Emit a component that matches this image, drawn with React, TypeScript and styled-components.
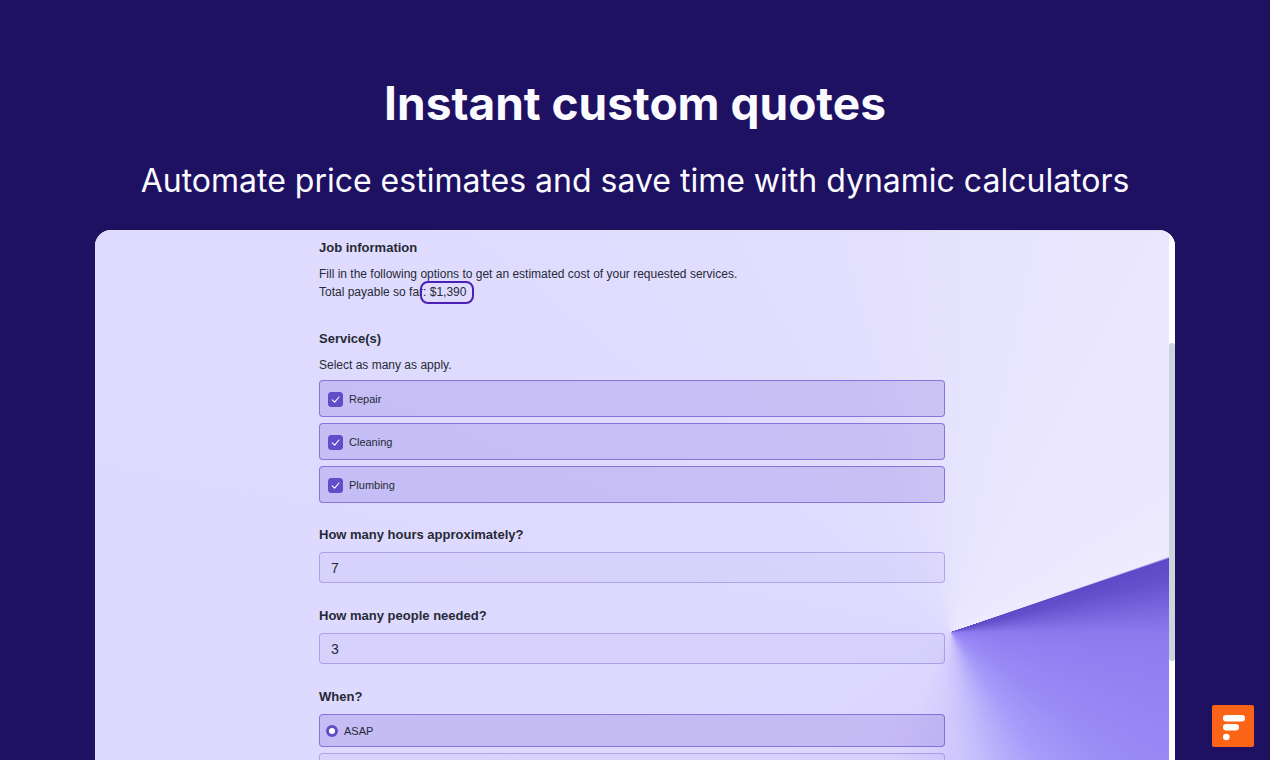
import React, { useState } from "react";
import styled, { createGlobalStyle } from "styled-components";

const GlobalStyle = createGlobalStyle`
  * { box-sizing: border-box; }
  body {
    margin: 0;
    background: #1e1162;
    font-family: "Liberation Sans", Arial, sans-serif;
    color: #262a35;
  }
`;

const Page = styled.main`
  position: relative;
  display: flex;
  flex-direction: column;
  align-items: center;
  height: 100vh;
  overflow: hidden;
  padding: 71px 40px 0;
`;

const Title = styled.h1`
  margin: 0;
  font: 700 46px/64px Inter, sans-serif;
  color: #fbfaff;
  text-align: center;
`;

const Subtitle = styled.p`
  margin: 26px 0 29px;
  font: 400 32px/40px Inter, sans-serif;
  color: #fbfaff;
  text-align: center;
`;

const Preview = styled.section`
  display: flex;
  flex: 1;
  width: 100%;
  max-width: 1080px;
  min-height: 0;
  overflow: hidden;
  border-radius: 16px 16px 0 0;
  background: #ffffff;
`;

const FormArea = styled.div`
  flex: 1;
  overflow: hidden;
  padding: 6px 24px 0;
  border-top: 1px solid #dedeea;
  background: conic-gradient(
    at 856px 401px,
    #e6e3fe 0deg,
    #e9e6fe 20deg,
    #ebe8fe 50deg,
    #eeebfe 70.9deg,
    #5f49c7 71.4deg,
    #6450cb 76deg,
    #8c79ee 90deg,
    #917ef1 98deg,
    #9a8af5 125deg,
    #a69bfa 145deg,
    #b8affb 158deg,
    #c8c0fc 170deg,
    #d4ccfd 184deg,
    #dcd5fe 205deg,
    #ddd8ff 240deg,
    #dedaff 280deg,
    #e0dcff 315deg,
    #e2defe 340deg,
    #e6e3fe 360deg
  );
`;

const ScrollTrack = styled.div`
  width: 6px;
  padding-top: 113px;
  background: #ffffff;
`;

const ScrollThumb = styled.div`
  height: 318px;
  border-radius: 3px;
  background: #cdd5dc;
`;

const Form = styled.form`
  width: 100%;
  max-width: 626px;
  margin: 0 auto;
`;

const Group = styled.fieldset<{ $after: number }>`
  min-width: 0;
  margin: 0 0 ${(p) => p.$after}px;
  padding: 0;
  border: 0;
`;

const Heading = styled.h2`
  margin: 0 0 6px;
  font-size: 13px;
  line-height: 22px;
  font-weight: 700;
`;

const FieldLabel = styled(Heading).attrs({ as: "label" })<{ htmlFor: string }>`
  display: block;
`;

const Copy = styled.p`
  margin: 0;
  font-size: 12px;
  line-height: 18px;
`;

const Amount = styled.span`
  position: relative;

  &::after {
    content: "";
    position: absolute;
    inset: -4px -8px -5px -10px;
    border: 2px solid #4b20b4;
    border-radius: 8px;
  }
`;

const OptionList = styled.div<{ $top: number }>`
  display: grid;
  gap: 6px;
  margin-top: ${(p) => p.$top}px;
`;

const Option = styled.label<{ $kind: "check" | "radio"; $selected: boolean }>`
  display: flex;
  align-items: center;
  gap: 6px;
  height: ${(p) => (p.$kind === "check" ? 37 : 33)}px;
  padding: 0 ${(p) => (p.$kind === "check" ? 8 : 6)}px;
  border: 1px solid rgba(98, 76, 204, ${(p) => (p.$selected ? 0.65 : 0.35)});
  border-radius: 4px;
  background: rgba(98, 76, 204, ${(p) => (p.$selected ? 0.2 : 0.04)});
  font-size: 11px;
  line-height: 16px;
`;

const CheckBox = styled.span`
  display: grid;
  margin-top: 2px;

  > * { grid-area: 1 / 1; }
  svg { pointer-events: none; }
`;

const CheckInput = styled.input`
  appearance: none;
  width: 15px;
  height: 15px;
  margin: 0;
  border: 1px solid #624cc8;
  border-radius: 3px;

  &:checked { background: #624cc8; }
`;

const RadioInput = styled.input`
  appearance: none;
  width: 12px;
  height: 12px;
  margin: 0;
  border: 1px solid #624cc8;
  border-radius: 50%;

  &:checked {
    border-width: 3px;
    border-color: #624cc8;
    background: #ffffff;
  }
`;

const TextInput = styled.input`
  display: block;
  width: 100%;
  height: 31px;
  padding: 0 11px;
  border: 1px solid rgba(98, 76, 204, 0.36);
  border-radius: 4px;
  background: rgba(98, 76, 204, 0.05);
  color: inherit;
  font: 14px/20px "Liberation Sans", Arial, sans-serif;
`;

const Logo = styled.svg`
  position: absolute;
  right: 16px;
  bottom: 13px;
`;

const SERVICES = ["Repair", "Cleaning", "Plumbing"];

function ServiceOption({ name }: { name: string }) {
  const [checked, setChecked] = useState(true);
  return (
    <Option $kind="check" $selected={checked}>
      <CheckBox>
        <CheckInput type="checkbox" checked={checked} onChange={() => setChecked(!checked)} />
        {checked && (
          <svg width="15" height="15" viewBox="0 0 15 15" fill="none" aria-hidden="true">
            <path d="M4.2 7.8 6.7 10.2 11 5" stroke="#fff" strokeWidth="1.1" strokeLinecap="round" strokeLinejoin="round" />
          </svg>
        )}
      </CheckBox>
      {name}
    </Option>
  );
}

function NumberField({ id, label, value }: { id: string; label: string; value: string }) {
  return (
    <Group $after={22}>
      <FieldLabel htmlFor={id}>{label}</FieldLabel>
      <TextInput id={id} type="text" inputMode="numeric" defaultValue={value} />
    </Group>
  );
}

export default function App() {
  return (
    <Page>
      <GlobalStyle />
      <Title>Instant custom quotes</Title>
      <Subtitle>Automate price estimates and save time with dynamic calculators</Subtitle>
      <Preview>
        <FormArea>
          <Form>
            <Group $after={27}>
              <Heading>Job information</Heading>
              <Copy>Fill in the following options to get an estimated cost of your requested services.</Copy>
              <Copy>
                Total payable so far: <Amount>$1,390</Amount>
              </Copy>
            </Group>
            <Group $after={21}>
              <Heading>Service(s)</Heading>
              <Copy>Select as many as apply.</Copy>
              <OptionList $top={6}>
                {SERVICES.map((name) => (
                  <ServiceOption key={name} name={name} />
                ))}
              </OptionList>
            </Group>
            <NumberField id="hours" label="How many hours approximately?" value="7" />
            <NumberField id="people" label="How many people needed?" value="3" />
            <Group $after={0}>
              <Heading>When?</Heading>
              <OptionList $top={0}>
                <Option $kind="radio" $selected>
                  <RadioInput type="radio" name="when" defaultChecked />
                  ASAP
                </Option>
                <Option as="div" $kind="radio" $selected={false} />
              </OptionList>
            </Group>
          </Form>
        </FormArea>
        <ScrollTrack>
          <ScrollThumb />
        </ScrollTrack>
      </Preview>
      <Logo width="42" height="42" viewBox="0 0 42 42" aria-hidden="true">
        <rect width="42" height="42" rx="2" fill="#fb6316" />
        <rect x="11" y="10" width="22" height="6.4" rx="3.2" fill="#fff" />
        <rect x="11" y="19" width="16" height="6.4" rx="3.2" fill="#fff" />
        <circle cx="14.3" cy="32" r="3.3" fill="#fff" />
      </Logo>
    </Page>
  );
}
